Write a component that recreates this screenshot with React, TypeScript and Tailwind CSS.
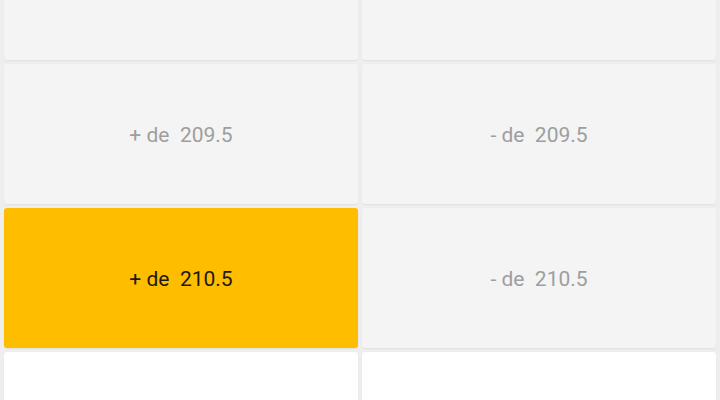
const rows = [
  { line: "208.5", hideLabel: true },
  { line: "209.5" },
  { line: "210.5", picked: "over" },
  { line: "211.5", blank: true },
];

export default function App() {
  return (
    <div className="h-[400px] w-[720px] overflow-hidden bg-[#eeeeee] font-['Roboto',sans-serif]">
      <div className="-mt-20 grid grid-cols-2 gap-1 px-1">
        {rows.map((row) => (
          <>
            <Cell
              key={row.line + "o"}
              label={row.hideLabel ? "" : `+ de  ${row.line}`}
              active={row.picked === "over"}
              blank={row.blank}
            />
            <Cell
              key={row.line + "u"}
              label={row.hideLabel ? "" : `- de  ${row.line}`}
              active={row.picked === "under"}
              blank={row.blank}
            />
          </>
        ))}
      </div>
    </div>
  );
}

function Cell({
  label,
  active,
  blank,
}: {
  label: string;
  active?: boolean;
  blank?: boolean;
}) {
  return (
    <div
      className={`flex h-[140px] items-center justify-center rounded-[3px] pt-[3px] shadow-[0_1px_2px_rgba(0,0,0,0.06)] ${
        active ? "bg-[#ffbd00] text-[#1c1a14]" : blank ? "bg-white" : "bg-[#f4f4f4] text-[#9e9e9e]"
      }`}
    >
      {!blank && label && <span className="whitespace-pre text-[21px]">{label}</span>}
    </div>
  );
}
